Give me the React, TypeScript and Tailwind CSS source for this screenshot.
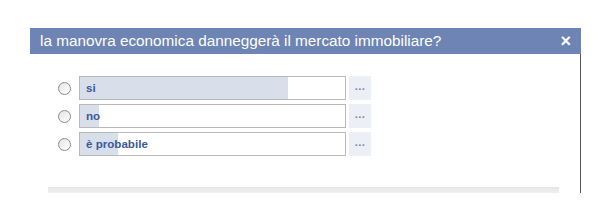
import React from 'react';

const OPTIONS = [
  { label: 'si', fill: 208 },
  { label: 'no', fill: 19 },
  { label: 'è probabile', fill: 38 },
];

const PollOption: React.FC<{ label: string; fill: number }> = ({ label, fill }) => (
  <div className="flex items-center h-[24px]">
    <div className="w-[13px] h-[13px] rounded-full border border-[#8a8a8a] bg-gradient-to-br from-[#e4e4e4] to-white ml-[58px]" />
    <div className="relative ml-[8px] w-[267px] h-[24px] border border-[#b9b9b9] bg-white">
      <div className="absolute left-0 top-0 bottom-0 bg-[#d8dfea]" style={{ width: fill }} />
      <span className="relative block pl-[6px] leading-[22px] text-[11.6px] font-bold text-[#3b5998]">{label}</span>
    </div>
    <div className="ml-[3px] w-[22px] h-[24px] bg-[#eceff5] flex items-center justify-center text-[#6d84b4] text-[11px] font-bold tracking-[0.5px] pb-[3px]">...</div>
  </div>
);

export default function App() {
  return (
    <div className="w-[610px] h-[220px] bg-white pt-[28px] font-['Liberation_Sans',Arial,sans-serif]">
      <div className="ml-[30px] w-[551px]">
        <div className="h-[26px] bg-[#6d84b4] flex items-center justify-between pl-[10px] pr-[10px]">
          <span className="text-white text-[15.3px] leading-none">la manovra economica danneggerà il mercato immobiliare?</span>
          <span className="text-white text-[18px] font-bold leading-none">×</span>
        </div>
        <div className="border-r border-[#555] h-[139px] pt-[22px]">
          <div className="flex flex-col gap-[4px] -ml-[30px]">
            {OPTIONS.map(o => <PollOption key={o.label} label={o.label} fill={o.fill} />)}
          </div>
          <div className="mt-[31px] ml-[18px] w-[511px] h-[6px] bg-gradient-to-b from-[#e6e6e6] to-[#f0f0f0]" />
        </div>
      </div>
    </div>
  );
}
